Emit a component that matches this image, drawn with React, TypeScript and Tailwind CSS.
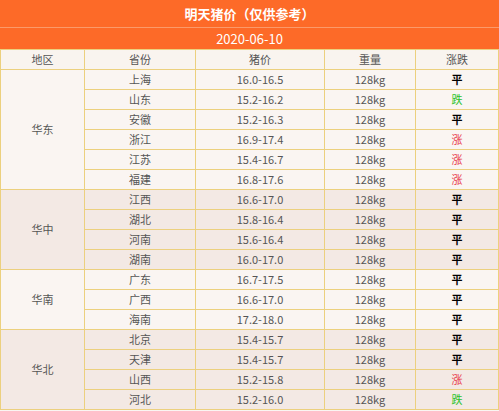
import React from "react"

type Row = { prov: string; price: string; trend: "平" | "涨" | "跌" }

const groups: { region: string; bg: string; rows: Row[] }[] = [
  {
    region: "华东",
    bg: "bg-[#faf5f2]",
    rows: [
      { prov: "上海", price: "16.0-16.5", trend: "平" },
      { prov: "山东", price: "15.2-16.2", trend: "跌" },
      { prov: "安徽", price: "15.2-16.3", trend: "平" },
      { prov: "浙江", price: "16.9-17.4", trend: "涨" },
      { prov: "江苏", price: "15.4-16.7", trend: "涨" },
      { prov: "福建", price: "16.8-17.6", trend: "涨" },
    ],
  },
  {
    region: "华中",
    bg: "bg-[#f3e9e4]",
    rows: [
      { prov: "江西", price: "16.6-17.0", trend: "平" },
      { prov: "湖北", price: "15.8-16.4", trend: "平" },
      { prov: "河南", price: "15.6-16.4", trend: "平" },
      { prov: "湖南", price: "16.0-17.0", trend: "平" },
    ],
  },
  {
    region: "华南",
    bg: "bg-[#faf5f2]",
    rows: [
      { prov: "广东", price: "16.7-17.5", trend: "平" },
      { prov: "广西", price: "16.6-17.0", trend: "平" },
      { prov: "海南", price: "17.2-18.0", trend: "平" },
    ],
  },
  {
    region: "华北",
    bg: "bg-[#f3e9e4]",
    rows: [
      { prov: "北京", price: "15.4-15.7", trend: "平" },
      { prov: "天津", price: "15.4-15.7", trend: "平" },
      { prov: "山西", price: "15.2-15.8", trend: "涨" },
      { prov: "河北", price: "15.2-16.0", trend: "跌" },
    ],
  },
]

const trendClass = {
  平: "text-black font-bold",
  涨: "text-[#e8394a]",
  跌: "text-[#2cc22c]",
}

const cell = "border border-[#ecd07e] h-[20px] p-0 text-center align-middle"

export default function App() {
  return (
    <div
      className="w-[499px] h-[411px] overflow-hidden bg-[#faf5f2] text-[11px] text-[#555]"
      style={{ fontFamily: '"Noto Sans CJK SC", "Noto Sans", sans-serif' }}
    >
      <div className="h-[28px] bg-[#fd6a28] flex items-center justify-center text-white font-bold text-[13px] border-b border-[#fb9a6a]">
        <span style={{ fontFamily: '"Noto Sans CJK SC", serif' }}>明天猪价（仅供参考）</span>
      </div>
      <div className="h-[21px] bg-[#fd6a28] flex items-center justify-center text-white text-[13px]">
        2020-06-10
      </div>
      <table className="w-[498px] border-collapse table-fixed">
        <colgroup>
          <col className="w-[84px]" />
          <col className="w-[111px]" />
          <col className="w-[129px]" />
          <col className="w-[91px]" />
          <col className="w-[83px]" />
        </colgroup>
        <thead>
          <tr className="bg-[#f9f4ef]">
            <th className={`${cell} font-normal`}>地区</th>
            <th className={`${cell} font-normal`}>省份</th>
            <th className={`${cell} font-normal`}>猪价</th>
            <th className={`${cell} font-normal`}>重量</th>
            <th className={`${cell} font-normal`}>涨跌</th>
          </tr>
        </thead>
        <tbody>
          {groups.map((g) =>
            g.rows.map((r, i) => (
              <tr key={g.region + r.prov} className={g.bg}>
                {i === 0 && (
                  <td className={cell} rowSpan={g.rows.length}>
                    {g.region}
                  </td>
                )}
                <td className={cell}>{r.prov}</td>
                <td className={cell}>{r.price}</td>
                <td className={cell}>128kg</td>
                <td className={`${cell} ${trendClass[r.trend]}`}>{r.trend}</td>
              </tr>
            ))
          )}
        </tbody>
      </table>
    </div>
  )
}
